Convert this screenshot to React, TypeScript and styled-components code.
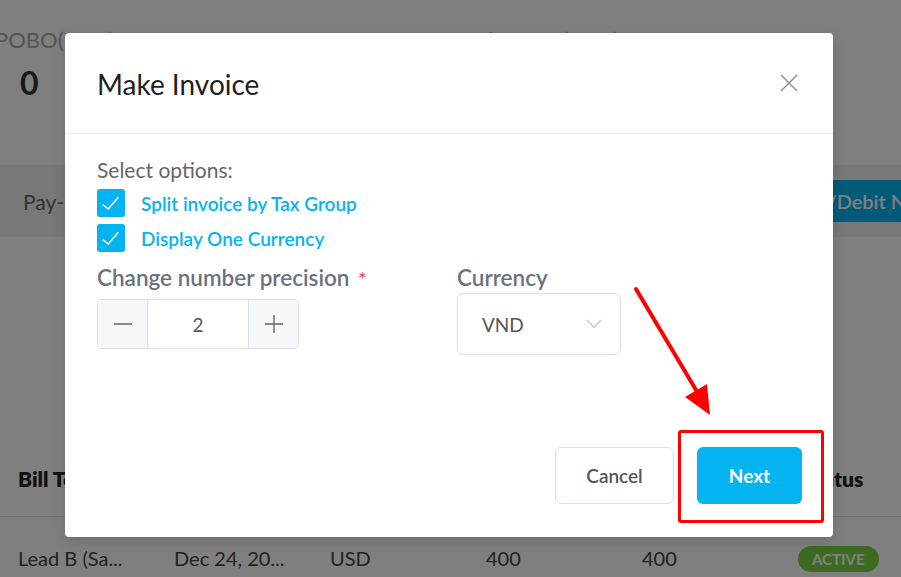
import React from 'react';
import styled, { createGlobalStyle } from 'styled-components';

const GlobalStyle = createGlobalStyle`
  html, body {
    margin: 0;
    padding: 0;
    background: #ffffff;
    font-family: 'Lato', 'Open Sans', sans-serif;
  }
  * {
    box-sizing: border-box;
  }
`;

const BLUE = '#03b4f0';

export default function App() {
  return (
    <Page>
      <GlobalStyle />
      <StatsRow>
        <Stat>
          <StatLabel>POBO(USD)</StatLabel>
          <StatValue>0</StatValue>
        </Stat>
        <Stat>
          <StatLabel>Total COBO(USD)</StatLabel>
          <StatValue>0</StatValue>
        </Stat>
      </StatsRow>
      <TabBar>
        <Tab>Pay-in</Tab>
        <NoteButton>Credit/Debit Note</NoteButton>
      </TabBar>
      <Table>
        <HeadRow>
          <HeadCell>Bill To</HeadCell>
          <HeadCell>Date</HeadCell>
          <HeadCell>Currency</HeadCell>
          <HeadCell>Amount</HeadCell>
          <HeadCell>Balance</HeadCell>
          <HeadCell>Status</HeadCell>
        </HeadRow>
        <BodyRow>
          <Cell>Lead B (Sa...</Cell>
          <Cell>Dec 24, 20...</Cell>
          <Cell>USD</Cell>
          <Cell>400</Cell>
          <Cell>400</Cell>
          <Cell>
            <Badge>ACTIVE</Badge>
          </Cell>
        </BodyRow>
      </Table>

      <Mask />

      <Modal>
        <ModalHeader>
          <Title>Make Invoice</Title>
          <CloseButton aria-label='close'>
            <svg width='18' height='18' viewBox='0 0 18 18'>
              <path d='M1 1 L17 17 M17 1 L1 17' stroke='#8c8c8c' strokeWidth='1.4' fill='none' />
            </svg>
          </CloseButton>
        </ModalHeader>
        <ModalBody>
          <SectionLabel>Select options:</SectionLabel>
          <CheckList>
            <CheckRow>
              <CheckBox>
                <CheckMark />
              </CheckBox>
              <CheckText>Split invoice by Tax Group</CheckText>
            </CheckRow>
            <CheckRow>
              <CheckBox>
                <CheckMark />
              </CheckBox>
              <CheckText>Display One Currency</CheckText>
            </CheckRow>
          </CheckList>
          <FieldGrid>
            <Field>
              <FieldLabel>
                Change number precision <Required>*</Required>
              </FieldLabel>
              <Stepper>
                <StepButton>
                  <svg width='20' height='20' viewBox='0 0 20 20'>
                    <path d='M1 10 H19' stroke='#666' strokeWidth='1.4' />
                  </svg>
                </StepButton>
                <StepValue>2</StepValue>
                <StepButton>
                  <svg width='20' height='20' viewBox='0 0 20 20'>
                    <path d='M1 10 H19 M10 1 V19' stroke='#666' strokeWidth='1.4' />
                  </svg>
                </StepButton>
              </Stepper>
            </Field>
            <Field>
              <FieldLabel>Currency</FieldLabel>
              <Select>
                <span>VND</span>
                <svg width='16' height='10' viewBox='0 0 16 10'>
                  <path d='M1 1 L8 8.5 L15 1' stroke='#c0c4cc' strokeWidth='1.3' fill='none' />
                </svg>
              </Select>
            </Field>
          </FieldGrid>
        </ModalBody>
        <ModalFooter>
          <CancelButton>Cancel</CancelButton>
          <NextButton>Next</NextButton>
        </ModalFooter>
      </Modal>

      <HighlightBox />
      <Arrow width='901' height='577' viewBox='0 0 901 577'>
        <line x1='636' y1='289' x2='699' y2='395' stroke='#ff0000' strokeWidth='4' strokeLinecap='round' />
        <polygon points='685,397 707,384 710,415' fill='#ff0000' />
      </Arrow>
    </Page>
  );
}

function CheckMark() {
  return (
    <svg width='28' height='28' viewBox='0 0 28 28'>
      <path d='M5.7 15.7 L11.3 20 L21.3 8.3' stroke='#ffffff' strokeWidth='1.5' fill='none' />
    </svg>
  );
}

const Page = styled.div`
  position: relative;
  width: 901px;
  height: 577px;
  overflow: hidden;
  background: #ffffff;
`;

const StatsRow = styled.div`
  display: grid;
  grid-template-columns: 452px 1fr;
  height: 165px;
  padding-top: 26px;
`;

const Stat = styled.div`
  display: flex;
  flex-direction: column;
  gap: 10px;
`;

const StatLabel = styled.div`
  font-size: 22px;
  color: #a8a8a8;
  margin-left: -5px;
`;

const StatValue = styled.div`
  font-size: 32px;
  font-weight: 700;
  color: #333333;
  padding-left: 20px;
`;

const TabBar = styled.div`
  display: flex;
  align-items: center;
  height: 72px;
  background: #f0f0f0;
  padding-left: 23px;
`;

const Tab = styled.div`
  flex: 1;
  font-size: 21px;
  color: #666666;
`;

const NoteButton = styled.div`
  width: 260px;
  height: 42px;
  margin-right: -116px;
  padding-left: 16px;
  display: flex;
  align-items: center;
  background: ${BLUE};
  color: #ffffff;
  font-size: 20px;
  font-weight: 600;
  white-space: nowrap;
`;

const Table = styled.div`
  margin-top: 203px;
`;

const HeadRow = styled.div`
  display: grid;
  grid-template-columns: repeat(6, 156px);
  align-items: center;
  height: 77px;
  border-bottom: 1px solid #e0e0e0;
  padding-left: 18px;
`;

const HeadCell = styled.div`
  font-size: 21px;
  font-weight: 800;
  color: #222222;
  &:last-child {
    margin-left: 6px;
  }
`;

const BodyRow = styled.div`
  display: grid;
  grid-template-columns: repeat(6, 156px);
  align-items: center;
  height: 82px;
  padding-left: 18px;
`;

const Cell = styled.div`
  font-size: 20px;
  color: #444444;
`;

const Badge = styled.span`
  display: inline-block;
  padding: 4px 14px;
  border-radius: 14px;
  background: #7ad442;
  color: #ffffff;
  font-size: 15px;
  font-weight: 700;
`;

const Mask = styled.div`
  position: absolute;
  inset: 0;
  background: rgba(0, 0, 0, 0.5);
`;

const Modal = styled.div`
  position: absolute;
  left: 65px;
  top: 33px;
  width: 768px;
  height: 504px;
  display: flex;
  flex-direction: column;
  background: #ffffff;
  border-radius: 4px;
  box-shadow: 0 4px 12px rgba(0, 0, 0, 0.15);
`;

const ModalHeader = styled.div`
  display: flex;
  align-items: center;
  justify-content: space-between;
  height: 101px;
  padding: 0 35px 0 32px;
  border-bottom: 1px solid #ececec;
`;

const Title = styled.div`
  font-size: 28px;
  color: #1f1f1f;
  padding-top: 2px;
`;

const CloseButton = styled.div`
  display: flex;
  cursor: pointer;
`;

const ModalBody = styled.div`
  flex: 1;
  padding: 23px 32px 0;
`;

const SectionLabel = styled.div`
  font-size: 21px;
  color: #666666;
  line-height: 26px;
`;

const CheckList = styled.div`
  display: flex;
  flex-direction: column;
  gap: 7px;
  margin-top: 6px;
`;

const CheckRow = styled.div`
  display: flex;
  align-items: center;
  gap: 16px;
`;

const CheckBox = styled.div`
  display: flex;
  width: 28px;
  height: 28px;
  border-radius: 3px;
  background: ${BLUE};
`;

const CheckText = styled.div`
  font-size: 19px;
  font-weight: 600;
  color: ${BLUE};
`;

const FieldGrid = styled.div`
  display: grid;
  grid-template-columns: 360px 1fr;
  margin-top: 12px;
`;

const Field = styled.div`
  display: flex;
  flex-direction: column;
  align-items: flex-start;
`;

const FieldLabel = styled.div`
  font-size: 22.5px;
  font-weight: 600;
  color: #6b7280;
  line-height: 28px;
  margin-bottom: 1px;
`;

const Required = styled.span`
  color: #ff4d4f;
  font-size: 20px;
  margin-left: 3px;
`;

const Stepper = styled.div`
  display: flex;
  height: 50px;
  border: 1px solid #dcdfe6;
  border-radius: 5px;
  overflow: hidden;
  margin-top: 6px;
`;

const StepButton = styled.div`
  display: flex;
  align-items: center;
  justify-content: center;
  width: 50px;
  background: #f5f7fa;
  &:first-child {
    border-right: 1px solid #dcdfe6;
  }
  &:last-child {
    border-left: 1px solid #dcdfe6;
  }
`;

const StepValue = styled.div`
  display: flex;
  align-items: center;
  justify-content: center;
  width: 100px;
  font-size: 19px;
  color: #555555;
`;

const Select = styled.div`
  display: flex;
  align-items: center;
  justify-content: space-between;
  width: 164px;
  height: 62px;
  padding: 0 18px 0 24px;
  border: 1px solid #dcdfe6;
  border-radius: 6px;
  font-size: 19px;
  color: #555555;
`;

const ModalFooter = styled.div`
  display: flex;
  justify-content: flex-end;
  gap: 23px;
  padding: 0 31px 33px;
`;

const BaseButton = styled.div`
  display: flex;
  align-items: center;
  justify-content: center;
  height: 57px;
  border-radius: 6px;
  font-size: 19px;
  cursor: pointer;
`;

const CancelButton = styled(BaseButton)`
  width: 119px;
  border: 1px solid #dcdfe6;
  color: #555555;
  font-weight: 600;
`;

const NextButton = styled(BaseButton)`
  width: 105px;
  background: ${BLUE};
  color: #ffffff;
  font-weight: 700;
`;

const HighlightBox = styled.div`
  position: absolute;
  left: 678px;
  top: 430px;
  width: 146px;
  height: 93px;
  border: 3px solid #ff0000;
  border-radius: 3px;
`;

const Arrow = styled.svg`
  position: absolute;
  left: 0;
  top: 0;
  pointer-events: none;
`;
